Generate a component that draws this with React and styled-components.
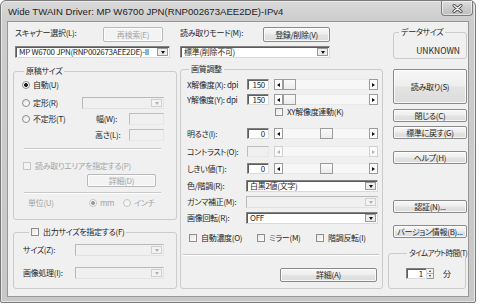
import React from 'react';
import styled, { createGlobalStyle } from 'styled-components';

const GlobalStyle = createGlobalStyle`
  html, body { margin: 0; padding: 0; background: #ffffff; }
  body {
    font-family: "Noto Sans CJK JP", "Noto Sans", sans-serif;
    font-size: 8px;
    letter-spacing: -0.3px;
    color: #262626;
    font-feature-settings: "palt" 1;
    font-variant-east-asian: proportional-width;
  }
  * { box-sizing: border-box; }
`;

const Window = styled.div`
  width: 476px;
  height: 303px;
  display: flex;
  flex-direction: column;
  border: 1px solid #7a7a7a;
  border-radius: 6px 6px 2px 2px;
  background: linear-gradient(180deg, #d9d9d9 0px, #cdcdcd 20px, #c8c8c8 100%);
  box-shadow: inset 0 0 0 1px rgba(255, 255, 255, 0.5);
  padding: 0 6px 5px 6px;
`;

const TitleBar = styled.div`
  height: 20px;
  display: flex;
  align-items: flex-start;
  flex: none;
`;

const TitleText = styled.span`
  margin: 5px 0 0 1px;
  font-family: "Liberation Sans", Arial, sans-serif;
  font-size: 9.6px;
  letter-spacing: 0;
  line-height: 12px;
  color: #222;
  white-space: nowrap;
`;

const CloseBtn = styled.div`
  margin-left: auto;
  margin-right: -4px;
  width: 32px;
  height: 15px;
  border: 1px solid #7d7d7d;
  border-top: none;
  border-radius: 0 0 4px 4px;
  background: linear-gradient(180deg, #dedede 0%, #cacaca 55%, #bdbdbd 100%);
  box-shadow: inset 0 0 0 1px rgba(255, 255, 255, 0.55);
  display: flex;
  align-items: center;
  justify-content: center;
`;

const Client = styled.div`
  width: 462px;
  height: 276px;
  flex: none;
  background: #f0f0f0;
  border: 1px solid #979797;
  display: flex;
  flex-direction: column;
`;

const TopRow = styled.div`
  display: flex;
  align-items: flex-start;
  margin-top: 5px;
  flex: none;
`;

const Col = styled.div`
  display: flex;
  flex-direction: column;
  flex: none;
  width: ${(p) => p.$w}px;
  margin-left: ${(p) => p.$ml || 0}px;
  margin-top: ${(p) => p.$mt || 0}px;
`;

const HeadRow = styled.div`
  display: flex;
  align-items: flex-start;
  height: 15px;
`;

const Text = styled.span`
  white-space: nowrap;
  line-height: 10px;
  flex: none;
  color: ${(p) => (p.$disabled ? '#a4a4a4' : '#262626')};
  margin-top: ${(p) => p.$mt || 0}px;
  margin-left: ${(p) => p.$ml || 0}px;
  width: ${(p) => (p.$w ? `${p.$w}px` : 'auto')};
`;

const Button = styled.div`
  flex: none;
  width: ${(p) => p.$w}px;
  height: ${(p) => p.$h}px;
  margin-left: ${(p) => (p.$auto ? 'auto' : `${p.$ml || 0}px`)};
  margin-right: ${(p) => p.$mr || 0}px;
  margin-top: ${(p) => p.$mt || 0}px;
  display: flex;
  align-items: center;
  justify-content: center;
  border: 1px solid ${(p) => (p.$disabled ? '#b9b9b9' : '#8a8a8a')};
  border-radius: 2px;
  background: ${(p) =>
    p.$disabled
      ? '#f3f3f3'
      : 'linear-gradient(180deg, #f7f7f7 0%, #eeeeee 48%, #e3e3e3 52%, #dcdcdc 100%)'};
  box-shadow: inset 0 0 0 1px rgba(255, 255, 255, 0.75);
  color: ${(p) => (p.$disabled ? '#a6a6a6' : '#262626')};
  line-height: 10px;
  white-space: nowrap;
`;

const Combo = styled.div`
  flex: none;
  width: ${(p) => p.$w}px;
  height: 12px;
  margin-top: ${(p) => p.$mt || 0}px;
  display: flex;
  align-items: stretch;
  border: 1px solid;
  border-color: ${(p) =>
    p.$disabled ? '#b9b9b9 #e3e3e3 #e3e3e3 #b9b9b9' : '#828282 #dadada #dadada #828282'};
  background: ${(p) => (p.$disabled ? '#f0f0f0' : '#ffffff')};
  box-shadow: ${(p) => (p.$disabled ? 'none' : 'inset 1px 1px 0 #5a5a5a')};
`;

const ComboValue = styled.span`
  flex: 1;
  min-width: 0;
  overflow: hidden;
  white-space: nowrap;
  line-height: 10px;
  padding-left: 3px;
  color: #262626;
`;

const ComboArrow = styled.div`
  flex: none;
  width: 11px;
  margin: 1px 1px 1px 0;
  border: 1px solid ${(p) => (p.$disabled ? '#cfcfcf' : '#9a9a9a')};
  background: ${(p) => (p.$disabled ? '#f3f3f3' : '#ececec')};
  display: flex;
  align-items: center;
  justify-content: center;
`;

const TriDown = styled.span`
  width: 0;
  height: 0;
  border-left: 2.5px solid transparent;
  border-right: 2.5px solid transparent;
  border-top: 3px solid ${(p) => (p.$disabled ? '#b0b0b0' : '#111')};
`;

const TriSide = styled.span`
  width: 0;
  height: 0;
  border-top: 2.5px solid transparent;
  border-bottom: 2.5px solid transparent;
  ${(p) => (p.$dir === 'left' ? 'border-right' : 'border-left')}: 3px solid
    ${(p) => (p.$disabled ? '#b4b4b4' : '#111')};
`;

const Group = styled.fieldset`
  margin: 0;
  margin-top: ${(p) => p.$mt || 0}px;
  margin-left: ${(p) => p.$ml || 0}px;
  padding: 0 ${(p) => p.$pr || 0}px 0 ${(p) => p.$pl || 0}px;
  width: ${(p) => p.$w}px;
  height: ${(p) => p.$h}px;
  min-width: 0;
  flex: none;
  border: 1px solid #cbcbcb;
  border-radius: 3px;
  display: flex;
  flex-direction: column;
`;

const Legend = styled.legend`
  padding: 0 2px;
  margin-left: ${(p) => p.$ml || 2}px;
  line-height: 10px;
  height: 10px;
  font-size: ${(p) => (p.$tight ? 7.6 : 8)}px;
  letter-spacing: ${(p) => (p.$tight ? -0.6 : -0.3)}px;
  color: #262626;
  display: flex;
  align-items: center;
  white-space: nowrap;
`;

const Row = styled.div`
  display: flex;
  align-items: center;
  flex: none;
  height: ${(p) => p.$h || 10}px;
  margin-top: ${(p) => p.$mt || 0}px;
  margin-left: ${(p) => p.$ml || 0}px;
`;

const Item = styled.div`
  display: flex;
  align-items: center;
  flex: none;
  width: ${(p) => (p.$w ? `${p.$w}px` : 'auto')};
`;

const RadioMark = styled.span`
  flex: none;
  width: 8px;
  height: 8px;
  border-radius: 50%;
  margin-right: 3px;
  border: 1px solid ${(p) => (p.$disabled ? '#c4c4c4' : '#8c8c8c')};
  background: ${(p) =>
    p.$checked
      ? `radial-gradient(circle, ${p.$disabled ? '#9c9c9c' : '#202020'} 0 1.7px, #fdfdfd 2.2px)`
      : p.$disabled
      ? '#f4f4f4'
      : 'linear-gradient(135deg, #e6e6e6, #ffffff)'};
`;

const CheckMark = styled.span`
  flex: none;
  width: 8px;
  height: 8px;
  margin-right: ${(p) => p.$mr ?? 4}px;
  border: 1px solid ${(p) => (p.$disabled ? '#c6c6c6' : '#8e8e8e')};
  background: ${(p) => (p.$disabled ? '#f3f3f3' : 'linear-gradient(135deg, #e4e4e4, #ffffff)')};
`;

const Edit = styled.div`
  flex: none;
  width: ${(p) => p.$w}px;
  height: ${(p) => p.$h || 11}px;
  margin-left: ${(p) => p.$ml || 0}px;
  border: 1px solid;
  border-color: ${(p) =>
    p.$disabled ? '#bdbdbd #e6e6e6 #e6e6e6 #bdbdbd' : '#808080 #dcdcdc #dcdcdc #808080'};
  background: ${(p) => (p.$disabled ? '#f0f0f0' : '#ffffff')};
  box-shadow: ${(p) => (p.$disabled ? 'none' : 'inset 1px 1px 0 #5e5e5e')};
  text-align: right;
  padding-right: 3px;
  line-height: 9px;
  color: #262626;
`;

const ScrollBar = styled.div`
  flex: none;
  width: 104px;
  height: 11px;
  margin-left: 5px;
  display: flex;
  align-items: stretch;
  background: #f7f7f7;
  border-top: 1px solid #eaeaea;
  border-bottom: 1px solid #eaeaea;
`;

const ScrollArrow = styled.div`
  flex: none;
  width: 9px;
  margin: -1px 0;
  border: 1px solid ${(p) => (p.$disabled ? '#d0d0d0' : '#9c9c9c')};
  background: #fbfbfb;
  display: flex;
  align-items: center;
  justify-content: center;
`;

const ScrollTrack = styled.div`
  flex: 1;
  display: flex;
  align-items: stretch;
`;

const ScrollThumb = styled.div`
  flex: none;
  width: 13px;
  margin: -1px 0 -1px ${(p) => p.$pos}px;
  border: 1px solid #9c9c9c;
  background: linear-gradient(180deg, #fafafa, #ececec);
`;

const Separator = styled.div`
  flex: none;
  height: 2px;
  width: ${(p) => p.$w}px;
  margin-top: ${(p) => p.$mt || 0}px;
  margin-left: ${(p) => p.$ml || 0}px;
  border-top: 1px solid #c8c8c8;
  border-bottom: 1px solid #ffffff;
`;

const DataValue = styled.span`
  align-self: flex-end;
  margin-top: 8px;
  line-height: 10px;
  color: #262626;
  font-size: 8.5px;
  letter-spacing: 0;
`;

const SpinBox = styled.div`
  flex: none;
  width: 7px;
  height: 11px;
  display: flex;
  flex-direction: column;
  border: 1px solid #9a9a9a;
  border-left: none;
  background: #f2f2f2;
`;

const SpinHalf = styled.div`
  flex: 1;
  display: flex;
  align-items: center;
  justify-content: center;
  border-bottom: ${(p) => (p.$top ? '1px solid #b0b0b0' : 'none')};
`;

const TinyTri = styled.span`
  width: 0;
  height: 0;
  border-left: 1.5px solid transparent;
  border-right: 1.5px solid transparent;
  ${(p) => (p.$up ? 'border-bottom' : 'border-top')}: 2px solid #333;
`;

const MainRow = styled.div`
  display: flex;
  align-items: flex-start;
  margin-top: 5px;
  flex: none;
`;

function ComboBox({ w, value, disabled, mt }) {
  return (
    <Combo $w={w} $disabled={disabled} $mt={mt}>
      <ComboValue>{value}</ComboValue>
      <ComboArrow $disabled={disabled}>
        <TriDown $disabled={disabled} />
      </ComboArrow>
    </Combo>
  );
}

function Scroll({ pos, disabled }) {
  return (
    <ScrollBar>
      <ScrollArrow $disabled={disabled}>
        <TriSide $dir="left" $disabled={disabled} />
      </ScrollArrow>
      <ScrollTrack>{!disabled && <ScrollThumb $pos={pos} />}</ScrollTrack>
      <ScrollArrow $disabled={disabled}>
        <TriSide $dir="right" $disabled={disabled} />
      </ScrollArrow>
    </ScrollBar>
  );
}

function SliderRow({ label, value, pos, disabled, mt }) {
  return (
    <Row $h={11} $mt={mt}>
      <Text $w={60}>{label}</Text>
      <Edit $w={22} $disabled={disabled}>
        {value}
      </Edit>
      <Scroll pos={pos} disabled={disabled} />
    </Row>
  );
}

function ComboRow({ label, value, disabled, mt }) {
  return (
    <Row $h={12} $mt={mt}>
      <Text $w={59}>{label}</Text>
      <ComboBox w={132} value={value} disabled={disabled} />
    </Row>
  );
}

export default function App() {
  return (
    <>
      <GlobalStyle />
      <Window>
        <TitleBar>
          <TitleText>Wide TWAIN Driver: MP W6700 JPN(RNP002673AEE2DE)-IPv4</TitleText>
          <CloseBtn>
            <svg width="11" height="9" viewBox="0 0 11 9">
              <path d="M2 1.5 L9 7.5 M9 1.5 L2 7.5" stroke="#4a4a4a" strokeWidth="3" strokeLinecap="round" />
              <path d="M2 1.5 L9 7.5 M9 1.5 L2 7.5" stroke="#f4f4f4" strokeWidth="1.4" strokeLinecap="round" />
            </svg>
          </CloseBtn>
        </TitleBar>
        <Client>
          <TopRow>
            <Col $w={155} $ml={7}>
              <HeadRow>
                <Text $mt={1}>スキャナー選択(L):</Text>
                <Button $w={60} $h={15} $auto $mr={7} $disabled>
                  再検索(E)
                </Button>
              </HeadRow>
              <ComboBox w={155} mt={4} value="MP W6700 JPN(RNP002673AEE2DE)-II" />
            </Col>
            <Col $w={150} $ml={10}>
              <HeadRow>
                <Text $mt={1}>読み取りモード(M):</Text>
                <Button $w={67} $h={15} $auto>
                  登録/削除(V)
                </Button>
              </HeadRow>
              <ComboBox w={150} mt={4} value="標準(削除不可)" />
            </Col>
            <Col $w={74} $ml={63}>
              <Group $w={74} $h={32} $pr={6}>
                <Legend $ml={5}>データサイズ</Legend>
                <DataValue>UNKNOWN</DataValue>
              </Group>
            </Col>
          </TopRow>

          <MainRow>
            <Col $w={164} $ml={5} $mt={2}>
              <Group $w={164} $h={154} $pl={8}>
                <Legend>原稿サイズ</Legend>
                <Row $mt={4}>
                  <RadioMark $checked />
                  <Text>自動(U)</Text>
                </Row>
                <Row $h={12} $mt={7}>
                  <Item $w={60}>
                    <RadioMark />
                    <Text>定形(R)</Text>
                  </Item>
                  <ComboBox w={82} value="" disabled />
                </Row>
                <Row $h={12} $mt={4}>
                  <Item $w={74}>
                    <RadioMark />
                    <Text>不定形(T)</Text>
                  </Item>
                  <Text $w={33}>幅(W):</Text>
                  <Edit $w={35} $h={12} $disabled />
                </Row>
                <Row $h={12} $mt={4}>
                  <Item $w={73} />
                  <Text $w={34}>高さ(L):</Text>
                  <Edit $w={35} $h={12} $disabled />
                </Row>
                <Separator $w={137} $mt={7} $ml={2} />
                <Row $mt={11} $ml={1}>
                  <CheckMark $disabled />
                  <Text $disabled>読み取りエリアを指定する(P)</Text>
                </Row>
                <Row $h={13} $mt={3} $ml={65}>
                  <Button $w={69} $h={13} $disabled>
                    詳細(D)
                  </Button>
                </Row>
                <Separator $w={137} $mt={5} $ml={2} />
                <Row $mt={4} $ml={6}>
                  <Text $w={61} $disabled>
                    単位(U)
                  </Text>
                  <Item $w={34}>
                    <RadioMark $checked $disabled />
                    <Text $disabled>mm</Text>
                  </Item>
                  <Item>
                    <RadioMark $disabled />
                    <Text $disabled>インチ</Text>
                  </Item>
                </Row>
              </Group>
              <Group $w={164} $h={62} $pl={8} $mt={7}>
                <Legend $ml={7}>
                  <CheckMark />
                  出力サイズを指定する(F)
                </Legend>
                <Row $h={12} $mt={7} $ml={1}>
                  <Text $w={52}>サイズ(Z):</Text>
                  <ComboBox w={89} value="" disabled />
                </Row>
                <Row $h={12} $mt={11} $ml={1}>
                  <Text $w={52}>画像処理(I):</Text>
                  <ComboBox w={89} value="" disabled />
                </Row>
              </Group>
            </Col>

            <Col $w={203} $ml={3}>
              <Group $w={203} $h={225} $pl={6}>
                <Legend>画質調整</Legend>
                <SliderRow mt={5} label="X解像度(X): dpi" value="150" pos={0} />
                <SliderRow mt={4} label="Y解像度(Y): dpi" value="150" pos={0} />
                <Row $mt={2} $ml={88}>
                  <CheckMark />
                  <Text>XY解像度連動(K)</Text>
                </Row>
                <SliderRow mt={11} label="明るさ(I):" value="0" pos={37} />
                <SliderRow mt={7} label="コントラスト(O):" value="" disabled />
                <SliderRow mt={6} label="しきい値(T):" value="0" pos={37} />
                <ComboRow mt={6} label="色/階調(R):" value="白黒2値(文字)" />
                <ComboRow mt={4} label="ガンマ補正(M):" value="" disabled />
                <ComboRow mt={4} label="画像回転(R):" value="OFF" />
                <Row $mt={9} $ml={2}>
                  <Item $w={68}>
                    <CheckMark />
                    <Text>自動濃度(O)</Text>
                  </Item>
                  <Item $w={59}>
                    <CheckMark />
                    <Text>ミラー(M)</Text>
                  </Item>
                  <Item>
                    <CheckMark />
                    <Text>階調反転(I)</Text>
                  </Item>
                </Row>
                <Separator $w={196} $mt={11} $ml={-4} />
                <Row $h={14} $mt={12} $ml={93}>
                  <Button $w={97} $h={14}>
                    詳細(A)
                  </Button>
                </Row>
              </Group>
            </Col>

            <Col $w={74} $ml={10} $mt={5}>
              <Button $w={74} $h={35}>
                読み取り(S)
              </Button>
              <Button $w={74} $h={13} $mt={5}>
                閉じる(C)
              </Button>
              <Button $w={74} $h={13} $mt={4}>
                標準に戻す(G)
              </Button>
              <Button $w={74} $h={13} $mt={12}>
                ヘルプ(H)
              </Button>
              <Button $w={74} $h={13} $mt={36}>
                認証(N)...
              </Button>
              <Button $w={74} $h={13} $mt={12}>
                バージョン情報(B)...
              </Button>
              <Group $w={78} $h={41} $ml={-5} $mt={10} $pl={17}>
                <Legend $ml={1} $tight>
                  タイムアウト時間(T)
                </Legend>
                <Row $h={11} $mt={10}>
                  <Edit $w={21}>1</Edit>
                  <SpinBox>
                    <SpinHalf $top>
                      <TinyTri $up />
                    </SpinHalf>
                    <SpinHalf>
                      <TinyTri />
                    </SpinHalf>
                  </SpinBox>
                  <Text $ml={9}>分</Text>
                </Row>
              </Group>
            </Col>
          </MainRow>
        </Client>
      </Window>
    </>
  );
}
